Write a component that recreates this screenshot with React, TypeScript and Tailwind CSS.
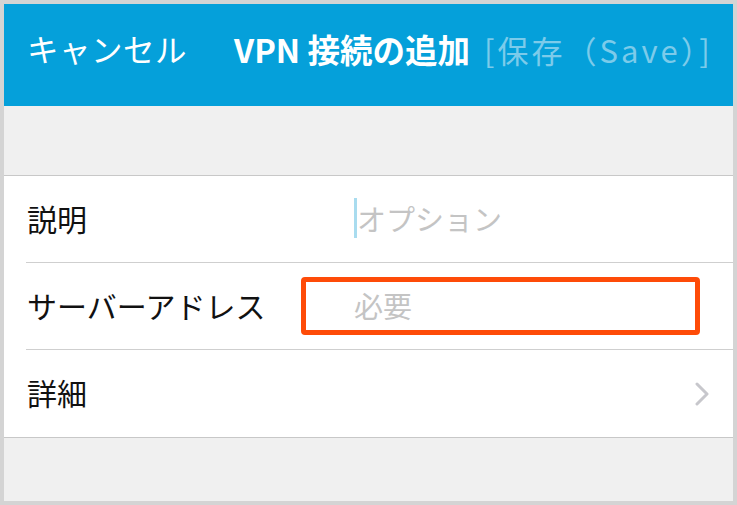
const font = {
  fontFamily: '"Noto Sans CJK JP", "Noto Sans", sans-serif',
};

function Row({
  label,
  children,
  divider = true,
}: {
  label: string;
  children?: React.ReactNode;
  divider?: boolean;
}) {
  return (
    <div className="relative flex h-[87px] items-center pb-[3px] pl-[23px]">
      <span className="w-[327px] text-[30px] leading-none text-[#111]">{label}</span>
      <div className="flex flex-1 items-center">{children}</div>
      {divider ? (
        <div className="absolute bottom-0 left-[22px] right-0 h-px bg-[#cfcfcf]" />
      ) : null}
    </div>
  );
}

export default function App() {
  return (
    <div
      className="flex h-[505px] w-[737px] flex-col border-[4px] border-[#d4d4d4] bg-[#f0f0f0]"
      style={font}
    >
      {/* Header */}
      <header className="flex h-[102px] shrink-0 items-center bg-[#05a0da] pb-[12px] pl-[23px]">
        <span className="text-[31.5px] leading-none tracking-[0.5px] text-white">キャンセル</span>
        <span className="ml-[47px] text-[32.5px] font-bold leading-none text-white">
          VPN 接続の追加
        </span>
        <span className="ml-[14px] text-[31px] leading-none tracking-[3px] text-[#7ccbea]">
          [保存（Save）]
        </span>
      </header>

      <div className="h-[70px] shrink-0 border-b border-[#c8c8c8] bg-[#f0f0f0]" />

      {/* Form */}
      <section className="flex flex-col border-b border-[#c8c8c8] bg-white">
        <Row label="説明">
          <span className="h-[40px] w-[3px] bg-[#a9dcef]" />
          <span className="text-[29px] leading-none text-[#c4c4c4]">オプション</span>
        </Row>
        <Row label="サーバーアドレス">
          <span className="text-[29px] leading-none text-[#c4c4c4]">必要</span>
          <div className="absolute left-[297px] top-[14px] h-[58px] w-[399px] rounded-[4px] border-[5px] border-[#fe4b08]" />
        </Row>
        <Row label="詳細" divider={false}>
          <svg
            className="ml-auto mr-[24px] mt-[4px]"
            width="14"
            height="24"
            viewBox="0 0 14 24"
            fill="none"
          >
            <path
              d="M2 2 L12 12 L2 22"
              stroke="#c7c7cc"
              strokeWidth="3"
              strokeLinecap="round"
              strokeLinejoin="round"
            />
          </svg>
        </Row>
      </section>

      <div className="flex-1 bg-[#f0f0f0]" />
    </div>
  );
}
